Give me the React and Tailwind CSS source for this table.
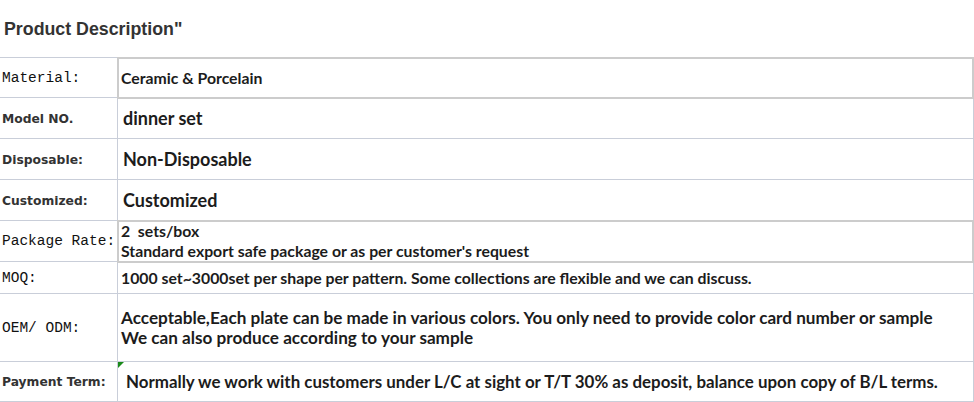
import React from 'react';

const mono = "font-['Liberation_Mono',monospace] text-[14.5px] text-[#111] whitespace-nowrap";
const sans = "font-['DejaVu_Sans',sans-serif] font-bold text-[12.3px] text-[#333] whitespace-nowrap";
const val = "font-['Lato',sans-serif] font-bold text-[#1c1c1c] whitespace-nowrap";

function Row({ h, label, labelCls, boxed, children, cls = '' }) {
  return (
    <div className={`flex ${h}`}>
      <div className={`w-[118px] shrink-0 flex items-center pl-[2px] pt-[2px] border-r border-b border-[#c9ced9] ${labelCls}`}>
        {label}
      </div>
      <div
        className={`relative flex-1 flex flex-col justify-center border-b border-[#c9ced9] ${
          boxed ? 'outline-2 outline-[#cccccc] -outline-offset-1 z-10' : ''
        } ${cls}`}
      >
        {children}
      </div>
    </div>
  );
}

export default function App() {
  return (
    <div className="w-[974px] h-[402px] bg-white overflow-hidden">
      <div className="h-[57px] flex items-center pl-[4px] pt-[1px]">
        <h1 className="font-['Liberation_Sans',Arial,sans-serif] font-bold text-[17.8px] text-[#333]">
          Product Description"
        </h1>
      </div>

      <div className="border-t border-r border-[#c9ced9]">
        <Row h="h-[40px]" label="Material:" labelCls={mono} boxed cls={`${val} text-[15.8px] pl-[3px]`}>
          <span>Ceramic &amp; Porcelain</span>
        </Row>
        <Row h="h-[41px]" label="Model NO." labelCls={sans} cls={`${val} text-[18px] pl-[5px]`}>
          <span>dinner set</span>
        </Row>
        <Row h="h-[41px]" label="Disposable:" labelCls={sans} cls={`${val} text-[18px] pl-[5px]`}>
          <span>Non-Disposable</span>
        </Row>
        <Row h="h-[41px]" label="Customized:" labelCls={sans} cls={`${val} text-[18px] pl-[5px]`}>
          <span>Customized</span>
        </Row>
        <Row h="h-[41px]" label="Package Rate:" labelCls={mono} boxed cls={`${val} text-[15.8px] leading-[20px] pl-[3px]`}>
          <span>2&nbsp; sets/box</span>
          <span>Standard export safe package or as per customer's request</span>
        </Row>
        <Row h="h-[32px]" label="MOQ:" labelCls={mono} cls={`${val} text-[15.8px] pl-[3px]`}>
          <span>1000 set~3000set per shape per pattern. Some collections are flexible and we can discuss.</span>
        </Row>
        <Row h="h-[68px]" label="OEM/ ODM:" labelCls={mono} cls={`${val} text-[17.15px] leading-[20px] pl-[3px]`}>
          <span>Acceptable,Each plate can be made in various colors. You only need to provide color card number or sample</span>
          <span>We can also produce according to your sample</span>
        </Row>
        <Row h="h-[40px]" label="Payment Term:" labelCls={sans} cls={`${val} text-[16.9px] pl-[8px]`}>
          <svg className="absolute left-0 top-0" width="6" height="6" viewBox="0 0 6 6">
            <polygon points="0,0 6,0 0,6" fill="#1a8a1a" />
          </svg>
          <span>Normally we work with customers under L/C at sight or T/T 30% as deposit, balance upon copy of B/L terms.</span>
        </Row>
      </div>
    </div>
  );
}
